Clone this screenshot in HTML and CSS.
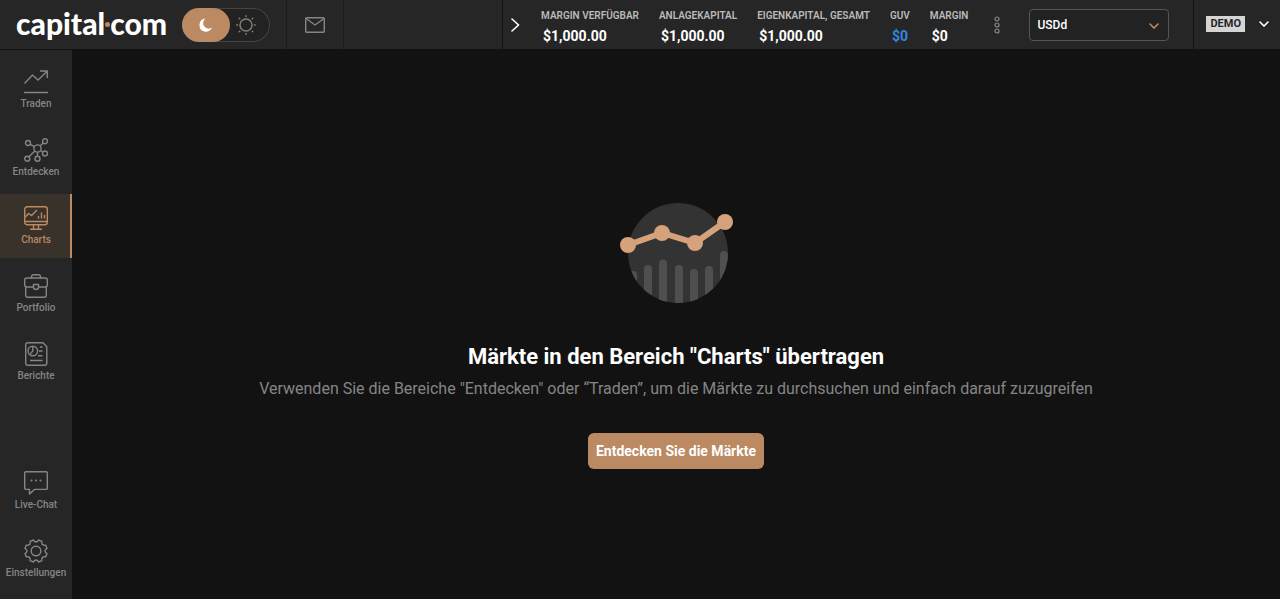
FILE: index.html
```html
<!DOCTYPE html>
<html lang="de">
<head>
<meta charset="utf-8">
<meta name="viewport" content="width=device-width, initial-scale=1">
<title>Charts</title>
<link rel="stylesheet" href="styles.css">
</head>
<body>
<div class="app">
  <header class="topbar">
    <a class="logo" href="#">capital<span class="logo-dot"></span>com</a>
    <fieldset class="theme" aria-label="Farbschema">
      <label class="theme-option">
        <input class="theme-input" type="radio" name="theme" aria-label="Dunkel" checked>
        <svg width="14" height="14" viewBox="0 0 14 14"><path d="M6.500.6A6.500 6.500 0 1 0 13 9.600 5 5 0 0 1 6.500.6Z" fill="#fff"/></svg>
      </label>
      <label class="theme-option">
        <input class="theme-input" type="radio" name="theme" aria-label="Hell">
        <svg width="20" height="20" viewBox="0 0 20 20" fill="none" stroke="#85817c" stroke-width="1.4" stroke-linecap="round"><circle cx="10" cy="10" r="6"/><path d="M10 .8v.8M10 18.4v.8M.8 10h.8M18.4 10h.8M3.200 3.200l.6.6M16.200 16.200l.6.6M3.200 16.800l.6-.6M16.200 3.800l.6-.6"/></svg>
      </label>
    </fieldset>
    <button class="mail" aria-label="Nachrichten">
      <svg width="20" height="16" viewBox="0 0 20 16" fill="none" stroke="#858585" stroke-width="1.4"><rect x=".7" y=".7" width="18.6" height="14.6" rx="1"/><path d="M1 1.5l9 6.500 9-6.500"/></svg>
    </button>
    <div class="account">
      <button class="collapse" aria-label="Einklappen">
        <svg width="9" height="14" viewBox="0 0 9 14" fill="none" stroke="#fff" stroke-width="1.6" stroke-linecap="round"><path d="M1 1l6.500 6L1 13"/></svg>
      </button>
      <dl class="stats">
        <div class="stat"><dt>MARGIN VERFÜGBAR</dt><dd>$1,000.00</dd></div>
        <div class="stat"><dt>ANLAGEKAPITAL</dt><dd>$1,000.00</dd></div>
        <div class="stat"><dt>EIGENKAPITAL, GESAMT</dt><dd>$1,000.00</dd></div>
        <div class="stat"><dt>GUV</dt><dd class="blue">$0</dd></div>
        <div class="stat"><dt>MARGIN</dt><dd>$0</dd></div>
      </dl>
      <button class="more" aria-label="Mehr">
        <svg width="6" height="18" viewBox="0 0 6 18" fill="none" stroke="#8a8a8a" stroke-width="1.200"><circle cx="3" cy="3" r="2"/><circle cx="3" cy="9" r="2"/><circle cx="3" cy="15" r="2"/></svg>
      </button>
      <div class="currency">
        <select class="currency-select" aria-label="Konto"><option>USDd</option></select>
        <svg class="currency-arrow" width="10" height="6" viewBox="0 0 10 6" fill="none" stroke="#bb8962" stroke-width="1.6" stroke-linecap="round"><path d="M1 1l4 4 4-4"/></svg>
      </div>
    </div>
    <button class="mode">
      <span class="badge">DEMO</span>
      <svg width="10" height="6" viewBox="0 0 10 6" fill="none" stroke="#fff" stroke-width="1.6" stroke-linecap="round"><path d="M1 1l4 4 4-4"/></svg>
    </button>
  </header>
  <div class="body">
    <nav class="sidebar">
      <a class="item" href="#">
        <svg class="icon" viewBox="0 0 24 24"><path d="M.5 13.500L8.500 5l5.500 5 9-8.500M16 1h7.300v7M0 22.500h24"/></svg>
        Traden
      </a>
      <a class="item" href="#">
        <svg class="icon" viewBox="0 0 24 24"><circle cx="13.500" cy="10.500" r="3.600"/><circle cx="4" cy="5" r="2.500"/><circle cx="21" cy="3.200" r="2.500"/><circle cx="21" cy="15.500" r="2.500"/><circle cx="3.200" cy="20.800" r="2.500"/><circle cx="13.500" cy="20.800" r="2.500"/><path d="M6.200 6.300l4.200 2.400M19.200 5l-3.200 3M18.800 14.200l-2.300-1.700M4.800 19l6-6M13.500 14.100v4.200"/></svg>
        Entdecken
      </a>
      <a class="item active" href="#" aria-current="page">
        <svg class="icon" viewBox="0 0 24 24"><rect x=".7" y=".7" width="22.600" height="18" rx="2.500"/><path d="M.6 15.500h22.800M9.500 18.600v4.300M14.500 18.600v4.300M6 23.300h12M1.500 11l3-3.500 3 2L13 4M14.500 12.500v-2.500M17.500 12.500v-6M20.500 12.500v-3.500"/></svg>
        Charts
      </a>
      <a class="item" href="#">
        <svg class="icon" viewBox="0 0 24 24"><rect x=".7" y="4" width="22.600" height="9" rx="2"/><path d="M1.700 13v8.300a2 2 0 0 0 2 2h16.600a2 2 0 0 0 2-2V13M7.500 4V2.700a2 2 0 0 1 2-2h5a2 2 0 0 1 2 2V4"/><path class="hole" d="M9.500 10.500h5v2.500a2.500 2.500 0 0 1-5 0Z"/></svg>
        Portfolio
      </a>
      <a class="item" href="#">
        <svg class="icon" viewBox="0 0 24 24"><path d="M3.700.7h15.300l3.800 4v16.600a2 2 0 0 1-2 2h-17.100a2 2 0 0 1-2-2v-18.600a2 2 0 0 1 2-2Z"/><circle cx="8.800" cy="9" r="4.800"/><path d="M8.800 4.200V9l-3 3.400M16 5h2.500M15 9h3.500M14 13.700h4.500M6 18.500h12.500"/></svg>
        Berichte
      </a>
      <a class="item bottom" href="#">
        <svg class="icon" viewBox="0 0 24 24"><path d="M1.700.7h20.600a1 1 0 0 1 1 1v15.700a1 1 0 0 1-1 1H10.500L5.500 23v-4.600H1.700a1 1 0 0 1-1-1V1.700a1 1 0 0 1 1-1Z"/><path class="dots" d="M7.500 9.500h.01M12 9.500h.01M16.500 9.500h.01"/></svg>
        Live-Chat
      </a>
      <a class="item" href="#">
        <svg class="icon" viewBox="-12 -12 24 24"><circle r="4.800"/><path d="M10.990-2.640Q7 0 10.990 2.640L9.630 5.900Q5 5 5.900 9.630L2.640 10.990Q0 7-2.640 10.990L-5.900 9.630Q-5 5-9.630 5.900L-10.990 2.640Q-7 0-10.990-2.640L-9.630-5.900Q-5-5-5.900-9.630L-2.640-10.990Q0-7 2.640-10.990L5.900-9.630Q5-5 9.630-5.900Z"/></svg>
        Einstellungen
      </a>
    </nav>
    <main class="content">
      <svg class="picture" width="112" height="100" viewBox="0 0 112 100">
        <defs><clipPath id="disc"><circle cx="58" cy="50" r="50"/></clipPath></defs>
        <circle cx="58" cy="50" r="50" fill="#333"/>
        <g clip-path="url(#disc)" stroke="#4f4f4f" stroke-width="8" stroke-linecap="round"><path d="M13 72v40M28 66v40M43 60.500v40M59 66v40M74 70v40M89 67v40M104 52v50"/></g>
        <path d="M8 42l34-12 33 10 30-21" fill="none" stroke="#d5a27b" stroke-width="6"/>
        <g fill="#d5a27b"><circle cx="8" cy="42" r="8"/><circle cx="42" cy="30" r="8"/><circle cx="75" cy="40" r="8"/><circle cx="105" cy="19" r="8"/></g>
      </svg>
      <h1 class="title">Märkte in den Bereich "Charts" übertragen</h1>
      <p class="text">Verwenden Sie die Bereiche "Entdecken" oder “Traden”, um die Märkte zu durchsuchen und einfach darauf zuzugreifen</p>
      <button class="cta">Entdecken Sie die Märkte</button>
    </main>
  </div>
</div>
</body>
</html>
```
FILE: styles.css
```css
* {
  box-sizing: border-box;
}

body {
  margin: 0;
  background: #121212;
  color: #fff;
  font-family: Roboto, "Liberation Sans", sans-serif;
}

button {
  border: 0;
  background: none;
  color: inherit;
  font: inherit;
  cursor: pointer;
}

svg {
  display: block;
  flex: none;
}

.app {
  display: flex;
  flex-direction: column;
  min-height: 100vh;
}

.topbar {
  display: flex;
  align-items: stretch;
  height: 50px;
  background: #262626;
  border-bottom: 1px solid #121212;
}

.logo {
  display: flex;
  align-items: center;
  width: 166px;
  padding: 0 0 4px 16px;
  color: #fff;
  font-family: Lato, sans-serif;
  font-size: 30px;
  font-weight: 900;
  line-height: 40px;
  text-decoration: none;
}

.logo-dot {
  flex: none;
  width: 5px;
  height: 5px;
  margin-top: 4px;
  border-radius: 50%;
  background: #bb8962;
}

.theme {
  display: flex;
  align-self: center;
  width: 88px;
  height: 34px;
  margin: 0 16px;
  padding: 0;
  border: 0;
  border-radius: 17px;
  background: #222;
  box-shadow: inset 0 0 0 1px #444;
}

.theme-option {
  display: flex;
  flex: 1;
  align-items: center;
  justify-content: center;
  padding-right: 8px;
  border-radius: 17px;
  cursor: pointer;
}

.theme-option:has(:checked) {
  flex: none;
  width: 48px;
  padding: 0;
  background: #bb8962;
}

.theme-input {
  position: absolute;
  opacity: 0;
}

.mail {
  display: flex;
  align-items: center;
  justify-content: center;
  width: 58px;
  padding: 0;
  border: solid #1a1a1a;
  border-width: 0 1px;
}

.account {
  display: flex;
  align-items: center;
  margin-left: auto;
  padding-right: 24px;
  border-left: 1px solid #121212;
}

.collapse {
  padding: 0 8px;
}

.stats {
  display: flex;
  gap: 20px;
  margin: 0 0 0 13px;
  padding-top: 4px;
}

.stat dt {
  color: #bbb;
  font-size: 10px;
  font-weight: 600;
  line-height: 16px;
}

.stat dd {
  margin: 0;
  padding: 2px 0 0 2px;
  font-size: 14px;
  font-weight: 700;
  line-height: 20px;
}

.stat .blue {
  color: #3187e0;
}

.more {
  margin: 0 23px 0 20px;
}

.currency {
  position: relative;
}

.currency-select {
  display: block;
  width: 140px;
  height: 32px;
  padding: 0 7px;
  border: 1px solid #555;
  border-radius: 4px;
  background: #222;
  color: #fff;
  appearance: none;
  font: 500 12px/16px Roboto, sans-serif;
}

.currency-arrow {
  position: absolute;
  top: 14px;
  right: 10px;
  pointer-events: none;
}

.mode {
  display: flex;
  align-items: center;
  gap: 14px;
  padding: 0 11px 2px 12px;
  border-left: 1px solid #121212;
}

.badge {
  padding: 0 4px;
  background: #d5d5d5;
  color: #262626;
  font-size: 11px;
  font-weight: 700;
  line-height: 16px;
}

.body {
  display: flex;
  flex: 1;
}

.sidebar {
  display: flex;
  flex-direction: column;
  flex: none;
  gap: 4px;
  width: 72px;
  padding: 8px 0;
  background: #262626;
}

.item {
  display: flex;
  flex-direction: column;
  align-items: center;
  gap: 2px;
  height: 64px;
  padding-top: 12px;
  color: #858585;
  font-size: 10px;
  font-weight: 500;
  line-height: 16px;
  text-decoration: none;
}

.bottom {
  margin-top: auto;
}

.active {
  background: #38322b;
  color: #bb8962;
  box-shadow: inset -2px 0 #bb8962;
}

.icon {
  width: 24px;
  height: 24px;
  fill: none;
  stroke: currentColor;
  stroke-width: 1.4;
  stroke-linejoin: round;
}

.hole {
  fill: #262626;
}

.dots {
  stroke-width: 2;
  stroke-linecap: round;
}

.content {
  display: flex;
  flex: 1;
  flex-direction: column;
  align-items: center;
  justify-content: center;
  padding: 22px 16px 0;
  text-align: center;
}

.picture {
  overflow: visible;
}

.title {
  margin: 40px 0 6px;
  font-size: 22px;
  font-weight: 700;
  line-height: 28px;
}

.text {
  margin: 0 0 32px;
  color: #858585;
  font-size: 16px;
  line-height: 24px;
}

.cta {
  height: 36px;
  padding: 0 8px;
  border-radius: 6px;
  background: #bb8962;
  font-size: 14px;
  font-weight: 700;
}
```
